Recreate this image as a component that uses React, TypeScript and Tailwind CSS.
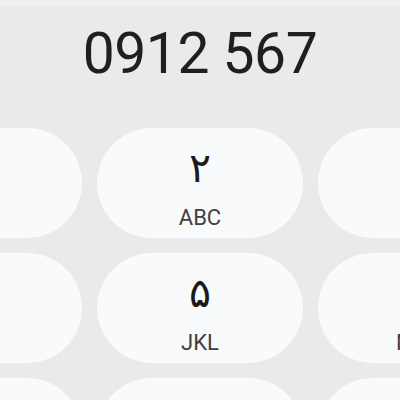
const keys = [
  { d: "۱", l: "" },
  { d: "۲", l: "ABC" },
  { d: "۳", l: "DEF" },
  { d: "۴", l: "GHI" },
  { d: "۵", l: "JKL" },
  { d: "۶", l: "MNO" },
  { d: "۷", l: "PQRS" },
  { d: "۸", l: "TUV" },
  { d: "۹", l: "WXYZ" },
];

export default function App() {
  return (
    <div className="w-[400px] h-[400px] overflow-hidden bg-[#e9eaec] flex flex-col">
      <div className="h-[6px] bg-[#f0f1f3] shrink-0" />
      <div className="h-[122px] shrink-0 flex justify-center">
        <p className="mt-[8px] text-[57px] leading-[80px] text-[#1f1f1f] font-['Roboto',sans-serif] tracking-[-0.5px]">
          0912 567
        </p>
      </div>
      <div className="flex justify-center">
        <div className="grid grid-cols-[206px_206px_206px] gap-[15px] shrink-0">
          {keys.map((k) => (
            <div
              key={k.d}
              className="h-[110px] rounded-full bg-[#f9fafc] flex flex-col items-center"
            >
              <span className="mt-[16px] h-[48px] text-[41px] leading-[48px] text-[#1a1a1a] font-['DejaVu_Sans',sans-serif]">
                {k.d}
              </span>
              <span className="mt-[14px] text-[22px] leading-[24px] text-[#404040] font-['Roboto',sans-serif]">
                {k.l}
              </span>
            </div>
          ))}
        </div>
      </div>
    </div>
  );
}
